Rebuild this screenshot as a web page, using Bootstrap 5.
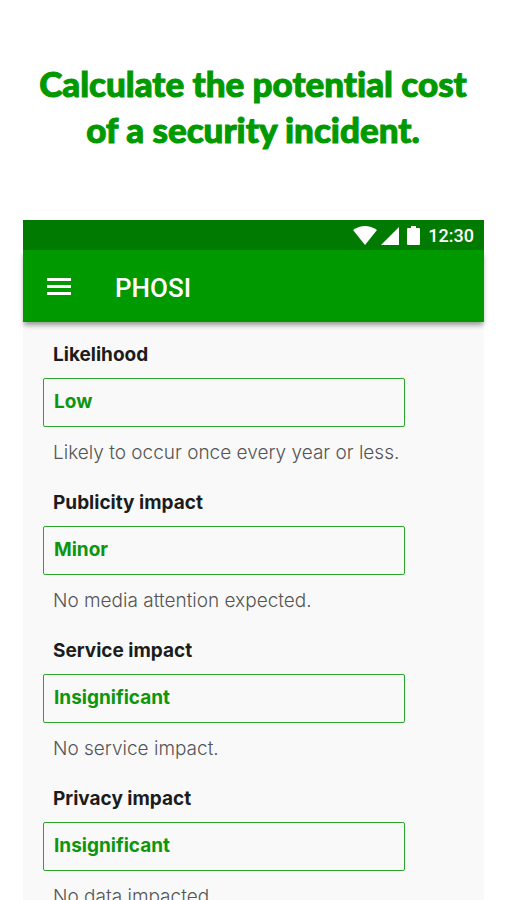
<!DOCTYPE html>
<html lang="en">
<head>
<meta charset="utf-8">
<meta name="viewport" content="width=device-width, initial-scale=1">
<title>PHOSI</title>
<link href="https://cdn.jsdelivr.net/npm/bootstrap@5.3.0/dist/css/bootstrap.min.css" rel="stylesheet">
<style>
body{background:#fff;font-family:Inter,"Liberation Sans",sans-serif;overflow-x:hidden}
.promo{height:100vh;overflow:hidden}
.headline{color:#090;font-family:Lato,"Open Sans",sans-serif;font-weight:900;font-size:35px;line-height:46px;font-variant-ligatures:none;-webkit-text-stroke:1px #090;padding:60px 0 68px;margin:0}
.device{background:#f9f9f9;margin:0 22px 0 23px}
.status{background:#007a00;height:30px;font-family:Roboto,sans-serif;font-size:18px;font-weight:500;padding-right:10px}
.appbar{background:#090;height:72px;padding-left:24px;box-shadow:0 4px 5px -1px rgba(0,0,0,.4)}
.appname{font-family:Roboto,sans-serif;font-weight:500;font-size:26px;line-height:32px;margin:4px 0 0 44px}
.menu-btn{line-height:0}
.fields{padding:19px 79px 0 20px}
.field{height:148px}
.field label,.note{display:block;font-size:19px;line-height:28px;padding-left:10px;white-space:nowrap}
.field label{color:#1c1c1c;font-weight:700;margin-bottom:9px}
.field select{appearance:none;display:block;width:100%;height:49px;border:1px solid #2ca52c;border-radius:2px;background:transparent;color:#0d960d;font-size:19px;font-weight:700;padding:0 10px 1px}
.note{color:#555;font-weight:300;margin:12px 0 0}
</style>
</head>
<body>
<main class="promo d-flex flex-column">
<h1 class="headline text-center">Calculate the potential cost<br>of a security incident.</h1>
<section class="device flex-grow-1">
<div class="status d-flex align-items-center justify-content-end text-white">
<svg width="24" height="19" viewBox="0 0 24 19" fill="#fff" aria-hidden="true"><path d="M0 4Q12-4 24 4L12 19Z"/></svg>
<svg class="ms-1" width="18" height="19" viewBox="0 0 18 19" fill="#fff" aria-hidden="true"><path d="M0 19L18 1V19Z"/></svg>
<svg class="mx-2" width="13" height="19" viewBox="0 0 13 19" fill="#fff" aria-hidden="true"><path d="M4 0H9V2H12Q13 2 13 3V18Q13 19 12 19H1Q0 19 0 18V3Q0 2 1 2H4Z"/></svg>
<span>12:30</span>
</div>
<header class="appbar d-flex align-items-center text-white">
<button class="menu-btn btn p-0 border-0" type="button" aria-label="Menu"><svg width="24" height="17" viewBox="0 0 24 17" fill="#fff"><path d="M0 0H24V3H0ZM0 7H24V10H0ZM0 14H24V17H0Z"/></svg></button>
<h2 class="appname">PHOSI</h2>
</header>
<form class="fields">
<div class="field"><label for="likelihood">Likelihood</label><select id="likelihood"><option>Low</option></select><p class="note">Likely to occur once every year or less.</p></div>
<div class="field"><label for="publicity">Publicity impact</label><select id="publicity"><option>Minor</option></select><p class="note">No media attention expected.</p></div>
<div class="field"><label for="service">Service impact</label><select id="service"><option>Insignificant</option></select><p class="note">No service impact.</p></div>
<div class="field"><label for="privacy">Privacy impact</label><select id="privacy"><option>Insignificant</option></select><p class="note">No data impacted.</p></div>
</form>
</section>
</main>
<script src="https://cdn.jsdelivr.net/npm/bootstrap@5.3.0/dist/js/bootstrap.bundle.min.js"></script>
</body>
</html>
